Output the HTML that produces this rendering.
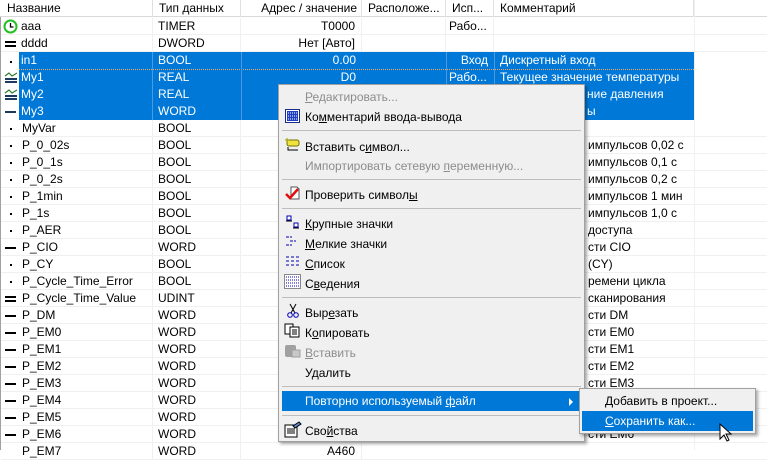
<!DOCTYPE html>
<html><head><meta charset="utf-8"><style>
*{margin:0;padding:0;box-sizing:border-box}
body{width:767px;height:450px;overflow:hidden;background:#fff;font-family:"Liberation Sans","DejaVu Sans",sans-serif;font-size:12px;color:#000;position:relative}
.hdr{position:absolute;top:0;left:0;width:767px;height:17px;background:#fff;border-bottom:1px solid #d9d9d9}
.hc{position:absolute;top:0;height:17px;line-height:16px;padding-left:6px;border-right:1px solid #e0e0e0;color:#000;white-space:nowrap;overflow:hidden}
.row{position:absolute;left:1px;width:766px;height:17px;border-bottom:1px solid #f0f0f0}
.c{position:absolute;top:0;height:16px;line-height:16px;white-space:nowrap;overflow:hidden;border-right:1px solid #f0f0f0}
.sel{position:absolute;left:19px;width:675px;height:17px;background:#0078d7}
.ic{position:absolute;left:5px;top:7px}
.menu{position:absolute;left:278px;top:84px;width:307px;height:358px;background:#f0f0f0;border:1px solid #a0a0a0;box-shadow:2px 2px 3px rgba(0,0,0,.35)}
.mi{position:absolute;left:26px;height:20px;line-height:20px;white-space:nowrap}
.dis{color:#8c8c8c}
.sep{position:absolute;left:3px;width:299px;height:1px;background:#bdbdbd}
u{text-decoration:underline}
.frag{position:absolute;left:587px;white-space:nowrap;line-height:16px}
</style></head><body>
<div style="position:absolute;left:0;top:0;width:1px;height:450px;background:#a0a0a0"></div>
<div class="hdr">
<div class="hc" style="left:1px;width:152px">Название</div>
<div class="hc" style="left:153px;width:88px">Тип данных</div>
<div class="hc" style="left:241px;width:121px;text-align:right;padding-right:4px">Адрес / значение</div>
<div class="hc" style="left:362px;width:84px">Расположе...</div>
<div class="hc" style="left:446px;width:48px">Исп...</div>
<div class="hc" style="left:494px;width:200px">Комментарий</div>
</div>
<div id="rows"></div>
<div class="sel" style="top:52px;height:68px"></div>
<div style="position:absolute;left:19px;top:69px;width:675px;border-top:1px dotted #f5a860"></div>

<div class="row" style="top:18px"><div class="c" style="left:0;width:152px;padding-left:20px">aaa</div><div class="c" style="left:152px;width:88px;padding-left:5px">TIMER</div><div class="c" style="left:240px;width:121px;text-align:right;padding-right:6px">T0000</div><div class="c" style="left:361px;width:84px"></div><div class="c" style="left:445px;width:48px;padding-left:3px">Рабо...</div></div>
<svg style="position:absolute;left:3px;top:19px" width="15" height="15"><circle cx="7.5" cy="7.5" r="6" fill="#fff" stroke="#22c022" stroke-width="2"/><path d="M7.5 4v4h3" stroke="#000" fill="none" stroke-width="1.3"/></svg>
<div class="row" style="top:35px"><div class="c" style="left:0;width:152px;padding-left:20px">dddd</div><div class="c" style="left:152px;width:88px;padding-left:5px">DWORD</div><div class="c" style="left:240px;width:121px;text-align:right;padding-right:6px">Нет [Авто]</div><div class="c" style="left:361px;width:84px"></div><div class="c" style="left:445px;width:48px"></div></div>
<div style="position:absolute;left:5px;top:41px;width:11px;height:2px;background:#000"></div><div style="position:absolute;left:5px;top:45px;width:11px;height:2px;background:#000"></div>

<div style="position:absolute;top:52px;left:0;width:767px;color:#fff">
<div style="position:absolute;top:0;left:21px;line-height:17px">in1</div><div style="position:absolute;top:0;left:158px;line-height:17px">BOOL</div><div style="position:absolute;top:0;left:241px;width:115px;text-align:right;line-height:17px">0.00</div><div style="position:absolute;top:0;left:446px;width:42px;text-align:right;line-height:17px">Вход</div><div style="position:absolute;top:0;left:500px;line-height:17px">Дискретный вход</div>
<div style="position:absolute;top:17px;left:21px;line-height:17px">My1</div><div style="position:absolute;top:17px;left:158px;line-height:17px">REAL</div><div style="position:absolute;top:17px;left:241px;width:115px;text-align:right;line-height:17px">D0</div><div style="position:absolute;top:17px;left:449px;line-height:17px">Рабо...</div><div style="position:absolute;top:17px;left:500px;line-height:17px">Текущее значение температуры</div>
<div style="position:absolute;top:34px;left:21px;line-height:17px">My2</div><div style="position:absolute;top:34px;left:158px;line-height:17px">REAL</div><div style="position:absolute;top:34px;left:587px;line-height:17px">ние давления</div>
<div style="position:absolute;top:51px;left:21px;line-height:17px">My3</div><div style="position:absolute;top:51px;left:158px;line-height:17px">WORD</div><div style="position:absolute;top:51px;left:587px;line-height:17px">ы</div>
</div>
<div style="position:absolute;left:152px;top:52px;width:1px;height:68px;background:#4a9be0"></div>
<div style="position:absolute;left:241px;top:52px;width:1px;height:68px;background:#4a9be0"></div>
<div style="position:absolute;left:446px;top:52px;width:1px;height:34px;background:#4a9be0"></div>
<div style="position:absolute;left:494px;top:52px;width:1px;height:34px;background:#4a9be0"></div>
<div style="position:absolute;left:10px;top:61px;width:2px;height:2px;background:#000"></div>
<svg style="position:absolute;left:4px;top:70px" width="14" height="14"><path d="M1 6l4-3 3 3 5-3" stroke="#2a7a2a" fill="none" stroke-width="1.2"/><rect x="1" y="8" width="12" height="2" fill="#1a3a60"/><rect x="1" y="11" width="12" height="2" fill="#1a3a60"/></svg>
<svg style="position:absolute;left:4px;top:87px" width="14" height="14"><path d="M1 6l4-3 3 3 5-3" stroke="#2a7a2a" fill="none" stroke-width="1.2"/><rect x="1" y="8" width="12" height="2" fill="#1a3a60"/><rect x="1" y="11" width="12" height="2" fill="#1a3a60"/></svg>
<div style="position:absolute;left:5px;top:111px;width:11px;height:2px;background:#1a3a60"></div>

<!-- remaining rows -->
<div style="position:absolute;top:120px;left:0;width:767px">
<div class="row" style="top:0"><div class="c" style="left:0;width:152px;padding-left:21px">MyVar</div><div class="c" style="left:152px;width:88px;padding-left:5px">BOOL</div><div class="c" style="left:240px;width:121px"></div></div>
<div class="row" style="top:17px"><div class="c" style="left:0;width:152px;padding-left:21px">P_0_02s</div><div class="c" style="left:152px;width:88px;padding-left:5px">BOOL</div><div class="c" style="left:240px;width:121px"></div><div class="frag">импульсов 0,02 с</div></div>
<div class="row" style="top:34px"><div class="c" style="left:0;width:152px;padding-left:21px">P_0_1s</div><div class="c" style="left:152px;width:88px;padding-left:5px">BOOL</div><div class="c" style="left:240px;width:121px"></div><div class="frag">импульсов 0,1 с</div></div>
<div class="row" style="top:51px"><div class="c" style="left:0;width:152px;padding-left:21px">P_0_2s</div><div class="c" style="left:152px;width:88px;padding-left:5px">BOOL</div><div class="c" style="left:240px;width:121px"></div><div class="frag">импульсов 0,2 с</div></div>
<div class="row" style="top:68px"><div class="c" style="left:0;width:152px;padding-left:21px">P_1min</div><div class="c" style="left:152px;width:88px;padding-left:5px">BOOL</div><div class="c" style="left:240px;width:121px"></div><div class="frag">импульсов 1 мин</div></div>
<div class="row" style="top:85px"><div class="c" style="left:0;width:152px;padding-left:21px">P_1s</div><div class="c" style="left:152px;width:88px;padding-left:5px">BOOL</div><div class="c" style="left:240px;width:121px"></div><div class="frag">импульсов 1,0 с</div></div>
<div class="row" style="top:102px"><div class="c" style="left:0;width:152px;padding-left:21px">P_AER</div><div class="c" style="left:152px;width:88px;padding-left:5px">BOOL</div><div class="c" style="left:240px;width:121px"></div><div class="frag">доступа</div></div>
<div class="row" style="top:119px"><div class="c" style="left:0;width:152px;padding-left:21px">P_CIO</div><div class="c" style="left:152px;width:88px;padding-left:5px">WORD</div><div class="c" style="left:240px;width:121px"></div><div class="frag">сти CIO</div></div>
<div class="row" style="top:136px"><div class="c" style="left:0;width:152px;padding-left:21px">P_CY</div><div class="c" style="left:152px;width:88px;padding-left:5px">BOOL</div><div class="c" style="left:240px;width:121px"></div><div class="frag">(CY)</div></div>
<div class="row" style="top:153px"><div class="c" style="left:0;width:152px;padding-left:21px">P_Cycle_Time_Error</div><div class="c" style="left:152px;width:88px;padding-left:5px">BOOL</div><div class="c" style="left:240px;width:121px"></div><div class="frag">ремени цикла</div></div>
<div class="row" style="top:170px"><div class="c" style="left:0;width:152px;padding-left:21px">P_Cycle_Time_Value</div><div class="c" style="left:152px;width:88px;padding-left:5px">UDINT</div><div class="c" style="left:240px;width:121px"></div><div class="frag">сканирования</div></div>
<div class="row" style="top:187px"><div class="c" style="left:0;width:152px;padding-left:21px">P_DM</div><div class="c" style="left:152px;width:88px;padding-left:5px">WORD</div><div class="c" style="left:240px;width:121px"></div><div class="frag">сти DM</div></div>
<div class="row" style="top:204px"><div class="c" style="left:0;width:152px;padding-left:21px">P_EM0</div><div class="c" style="left:152px;width:88px;padding-left:5px">WORD</div><div class="c" style="left:240px;width:121px"></div><div class="frag">сти EM0</div></div>
<div class="row" style="top:221px"><div class="c" style="left:0;width:152px;padding-left:21px">P_EM1</div><div class="c" style="left:152px;width:88px;padding-left:5px">WORD</div><div class="c" style="left:240px;width:121px"></div><div class="frag">сти EM1</div></div>
<div class="row" style="top:238px"><div class="c" style="left:0;width:152px;padding-left:21px">P_EM2</div><div class="c" style="left:152px;width:88px;padding-left:5px">WORD</div><div class="c" style="left:240px;width:121px"></div><div class="frag">сти EM2</div></div>
<div class="row" style="top:255px"><div class="c" style="left:0;width:152px;padding-left:21px">P_EM3</div><div class="c" style="left:152px;width:88px;padding-left:5px">WORD</div><div class="c" style="left:240px;width:121px"></div><div class="frag">сти EM3</div></div>
<div class="row" style="top:272px"><div class="c" style="left:0;width:152px;padding-left:21px">P_EM4</div><div class="c" style="left:152px;width:88px;padding-left:5px">WORD</div><div class="c" style="left:240px;width:121px"></div><div class="frag">сти EM4</div></div>
<div class="row" style="top:289px"><div class="c" style="left:0;width:152px;padding-left:21px">P_EM5</div><div class="c" style="left:152px;width:88px;padding-left:5px">WORD</div><div class="c" style="left:240px;width:121px"></div><div class="frag">сти EM5</div></div>
<div class="row" style="top:306px"><div class="c" style="left:0;width:152px;padding-left:21px">P_EM6</div><div class="c" style="left:152px;width:88px;padding-left:5px">WORD</div><div class="c" style="left:240px;width:121px"></div><div class="frag">сти EM6</div></div>
<div class="row" style="top:323px"><div class="c" style="left:0;width:152px;padding-left:21px">P_EM7</div><div class="c" style="left:152px;width:88px;padding-left:5px">WORD</div><div class="c" style="left:240px;width:121px;text-align:right;padding-right:6px">A460</div></div>
<!-- icons -->
<div style="position:absolute;left:10px;top:8px;width:2px;height:2px;background:#000"></div>
<div style="position:absolute;left:10px;top:25px;width:2px;height:2px;background:#000"></div>
<div style="position:absolute;left:10px;top:42px;width:2px;height:2px;background:#000"></div>
<div style="position:absolute;left:10px;top:59px;width:2px;height:2px;background:#000"></div>
<div style="position:absolute;left:10px;top:76px;width:2px;height:2px;background:#000"></div>
<div style="position:absolute;left:10px;top:93px;width:2px;height:2px;background:#000"></div>
<div style="position:absolute;left:10px;top:110px;width:2px;height:2px;background:#000"></div>
<div style="position:absolute;left:5px;top:127px;width:11px;height:2px;background:#000"></div>
<div style="position:absolute;left:10px;top:144px;width:2px;height:2px;background:#000"></div>
<div style="position:absolute;left:10px;top:161px;width:2px;height:2px;background:#000"></div>
<div style="position:absolute;left:5px;top:176px;width:11px;height:2px;background:#000"></div><div style="position:absolute;left:5px;top:180px;width:11px;height:2px;background:#000"></div>
<div style="position:absolute;left:5px;top:195px;width:11px;height:2px;background:#000"></div>
<div style="position:absolute;left:5px;top:212px;width:11px;height:2px;background:#000"></div>
<div style="position:absolute;left:5px;top:229px;width:11px;height:2px;background:#000"></div>
<div style="position:absolute;left:5px;top:246px;width:11px;height:2px;background:#000"></div>
<div style="position:absolute;left:5px;top:263px;width:11px;height:2px;background:#000"></div>
<div style="position:absolute;left:5px;top:280px;width:11px;height:2px;background:#000"></div>
<div style="position:absolute;left:5px;top:297px;width:11px;height:2px;background:#000"></div>
<div style="position:absolute;left:5px;top:314px;width:11px;height:2px;background:#000"></div>
</div>
<div style="position:absolute;left:694px;top:0;width:1px;height:450px;background:#f0f0f0"></div>

<div class="menu">
<div class="mi dis" style="top:2px"><u>Р</u>едактировать...</div>
<svg style="position:absolute;left:6px;top:24px" width="15" height="14"><rect x=".5" y=".5" width="14" height="13" fill="#fff" stroke="#1a2a8a"/><rect x="2" y="2" width="11" height="10" fill="#2040c0"/><path d="M3 4h9M3 7h9M3 10h9" stroke="#fff" stroke-width="1" stroke-dasharray="1 1"/></svg>
<div class="mi" style="top:22px">Ко<u>м</u>ментарий ввода-вывода</div>
<div class="sep" style="top:45px"></div>
<svg style="position:absolute;left:5px;top:52px" width="18" height="15"><rect x="3" y="3" width="12" height="6" rx="2" fill="#f0e040" stroke="#707000"/><path d="M3 1v4M1 3h4" stroke="#a0a000"/><path d="M4 10v3h10" stroke="#000" fill="none"/></svg>
<div class="mi" style="top:52px">Вставить с<u>и</u>мвол...</div>
<div class="mi dis" style="top:71px">Импортировать сетевую <u>п</u>еременную...</div>
<div class="sep" style="top:94px"></div>
<svg style="position:absolute;left:6px;top:101px" width="16" height="15"><path d="M6 1h6l2 2v10H6z" fill="#fff" stroke="#555"/><path d="M1 8l4 4 8-9" stroke="#e01010" stroke-width="2.5" fill="none"/></svg>
<div class="mi" style="top:100px">Проверить символ<u>ы</u></div>
<div class="sep" style="top:123px"></div>
<svg style="position:absolute;left:6px;top:130px" width="16" height="14"><rect x="2" y="1" width="4" height="4" fill="#fff" stroke="#0000b0"/><rect x="9" y="8" width="4" height="4" fill="#fff" stroke="#0000b0"/><path d="M1 6h6M8 13h6" stroke="#000"/></svg>
<div class="mi" style="top:129px"><u>К</u>рупные значки</div>
<svg style="position:absolute;left:6px;top:150px" width="16" height="14"><path d="M1 2h3M5 2h2M5 6h3M9 6h2M1 10h3M5 10h2" stroke="#0000b0"/></svg>
<div class="mi" style="top:149px"><u>М</u>елкие значки</div>
<svg style="position:absolute;left:6px;top:170px" width="16" height="14"><path d="M1 2h3M6 2h3M11 2h3M1 6h3M6 6h3M11 6h3M1 10h3M6 10h3M11 10h3" stroke="#0000b0"/></svg>
<div class="mi" style="top:169px"><u>С</u>писок</div>
<svg style="position:absolute;left:5px;top:189px" width="17" height="15"><rect x=".5" y=".5" width="16" height="14" fill="#fff" stroke="#888"/><path d="M2 3h13M2 6h13M2 9h13M2 12h13" stroke="#0000b0" stroke-dasharray="1 1"/></svg>
<div class="mi" style="top:189px">С<u>в</u>едения</div>
<div class="sep" style="top:212px"></div>
<svg style="position:absolute;left:7px;top:218px" width="14" height="16"><path d="M4 1l5 9M10 1L5 10" stroke="#000"/><circle cx="4" cy="12" r="2.3" fill="none" stroke="#0000b0"/><circle cx="10" cy="12" r="2.3" fill="none" stroke="#0000b0"/></svg>
<div class="mi" style="top:218px">Выр<u>е</u>зать</div>
<svg style="position:absolute;left:5px;top:238px" width="17" height="15"><rect x="1" y="1" width="8" height="10" fill="#fff" stroke="#000"/><rect x="6" y="4" width="9" height="10" fill="#fff" stroke="#000"/><path d="M8 7h5M8 9h5M8 11h5" stroke="#000"/></svg>
<div class="mi" style="top:238px">К<u>о</u>пировать</div>
<svg style="position:absolute;left:5px;top:258px" width="17" height="15"><rect x="1" y="2" width="11" height="12" rx="2" fill="#a0a0a0"/><rect x="8" y="7" width="8" height="7" fill="#c8c8c8" stroke="#a0a0a0"/></svg>
<div class="mi dis" style="top:258px"><u>В</u>ставить</div>
<div class="mi" style="top:278px">У<u>д</u>алить</div>
<div class="sep" style="top:301px"></div>
<div style="position:absolute;left:3px;top:306px;width:299px;height:20px;background:#0078d7"></div>
<div class="mi" style="top:306px;color:#fff">Повторно используемый <u>ф</u>айл</div>
<div style="position:absolute;left:290px;top:313px;width:0;height:0;border-left:4px solid #fff;border-top:4px solid transparent;border-bottom:4px solid transparent"></div>
<div class="sep" style="top:330px"></div>
<svg style="position:absolute;left:5px;top:336px" width="18" height="17"><rect x="1" y="4" width="12" height="12" fill="#fff" stroke="#000"/><path d="M3 8h8M3 10h8M3 12h8" stroke="#000"/><path d="M9 5l6-4 2 2-6 4z" fill="#5a8ad0" stroke="#000"/></svg>
<div class="mi" style="top:336px">Сво<u>й</u>ства</div>
</div>

<div style="position:absolute;left:579px;top:388px;width:177px;height:46px;background:#f0f0f0;border:1px solid #a0a0a0;box-shadow:2px 2px 3px rgba(0,0,0,.35)">
<div style="position:absolute;left:25px;top:2px;line-height:20px"><u>Д</u>обавить в проект...</div>
<div style="position:absolute;left:2px;top:22px;width:171px;height:20px;background:#0078d7"></div>
<div style="position:absolute;left:25px;top:22px;line-height:20px;color:#fff"><u>С</u>охранить как...</div>
</div>
<svg style="position:absolute;left:719px;top:423px" width="14" height="20"><path d="M1 1v15l4-4 3 6 2-1-3-6h5z" fill="#fff" stroke="#000"/></svg>
</body></html>
